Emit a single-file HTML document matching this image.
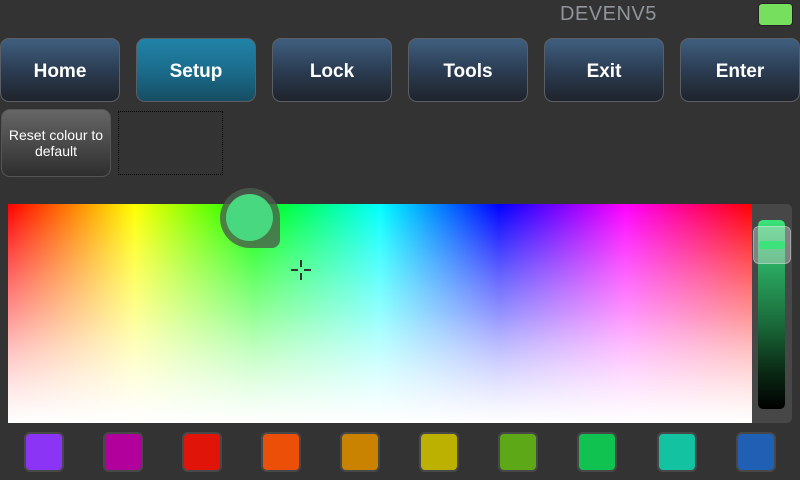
<!DOCTYPE html>
<html><head><meta charset="utf-8"><style>
*{margin:0;padding:0;box-sizing:border-box}
body{width:800px;height:480px;background:#333;position:relative;overflow:hidden;font-family:"Liberation Sans",sans-serif}
.t{position:absolute;left:560px;top:3px;color:#8f959b;font-size:20px;letter-spacing:0.5px}
.g{position:absolute;left:758px;top:3px;width:35px;height:23px;background:#76e05e;border-radius:4px;border:1px solid #222}
.b{position:absolute;top:38px;width:120px;height:64px;border-radius:9px;border:1px solid #5a5f66;background:linear-gradient(#3f5f80,#2a3a4f 55%,#1f232b);color:#fff;font-weight:bold;font-size:19px;display:flex;align-items:center;justify-content:center;padding-top:4px}
.b.s{background:linear-gradient(#2183a8,#1a6a89 55%,#164d62)}
.r{position:absolute;left:1px;top:109px;width:110px;height:68px;border-radius:9px;border:1px solid #555;background:linear-gradient(#666,#4a4a4a 50%,#2e2e2e);color:#fff;font-size:14px;text-align:center;display:flex;align-items:center;justify-content:center;line-height:16px}
.d{position:absolute;left:118px;top:111px;width:105px;height:64px;border:1px dotted #000}
.c{position:absolute;left:8px;top:204px;width:744px;height:219px;background:linear-gradient(rgba(255,255,255,0),#fff),linear-gradient(90deg,#f00,#ff0 17%,#0f0 33%,#0ff 50%,#00f 66%,#f0f 83%,#f00)}
.c:after{content:"";position:absolute;inset:0;background:linear-gradient(rgba(255,255,255,0) 0%,rgba(255,255,255,.15) 50%,rgba(255,255,255,.5) 100%)}
.p{position:absolute;left:752px;top:204px;width:40px;height:219px;background:#474747;border-radius:0 5px 5px 0}
.tr{position:absolute;left:758px;top:220px;width:27px;height:189px;border-radius:5px;background:linear-gradient(#3be37a,#2aa860 25%,#1a6a3a 55%,#0a2a14 80%,#000)}
.th{position:absolute;left:753px;top:226px;width:38px;height:38px;border-radius:6px;background:rgba(220,220,220,.4);border:1px solid rgba(255,255,255,.3)}
.th i{position:absolute;left:5px;top:14px;width:26px;height:8px;background:#3be37a;border-radius:3px}
.k{position:absolute;left:220px;top:188px;width:60px;height:60px;border-radius:30px 30px 8px 30px;background:rgba(75,95,75,.8)}
.k i{position:absolute;left:6px;top:6px;width:47px;height:47px;border-radius:50%;background:#48d880}
.w{position:absolute;top:432px;width:40px;height:40px;border-radius:6px;border:2px solid #484848}
</style></head><body>
<div class="t">DEVENV5</div><div class="g"></div>
<div class="b" style="left:0">Home</div>
<div class="b s" style="left:136px">Setup</div>
<div class="b" style="left:272px">Lock</div>
<div class="b" style="left:408px">Tools</div>
<div class="b" style="left:544px">Exit</div>
<div class="b" style="left:680px">Enter</div>
<div class="r">Reset colour to<br>default</div>
<div class="d"></div>
<div class="c"></div>
<svg style="position:absolute;left:290px;top:259px" width="22" height="22"><g stroke="#333" stroke-width="2"><path d="M11 1v7M11 14v7M1 11h7M14 11h7"/></g></svg>
<div class="k"><i></i></div>
<div class="p"></div><div class="tr"></div><div class="th"><i></i></div>
<div class="w" style="left:24px;background:#8b34f5"></div>
<div class="w" style="left:103px;background:#b2009c"></div>
<div class="w" style="left:182px;background:#e01408"></div>
<div class="w" style="left:261px;background:#ec5008"></div>
<div class="w" style="left:340px;background:#c98300"></div>
<div class="w" style="left:419px;background:#bcb000"></div>
<div class="w" style="left:498px;background:#5ca816"></div>
<div class="w" style="left:577px;background:#10c250"></div>
<div class="w" style="left:657px;background:#12c2a0"></div>
<div class="w" style="left:736px;background:#1f5fb4"></div>
</body></html>
